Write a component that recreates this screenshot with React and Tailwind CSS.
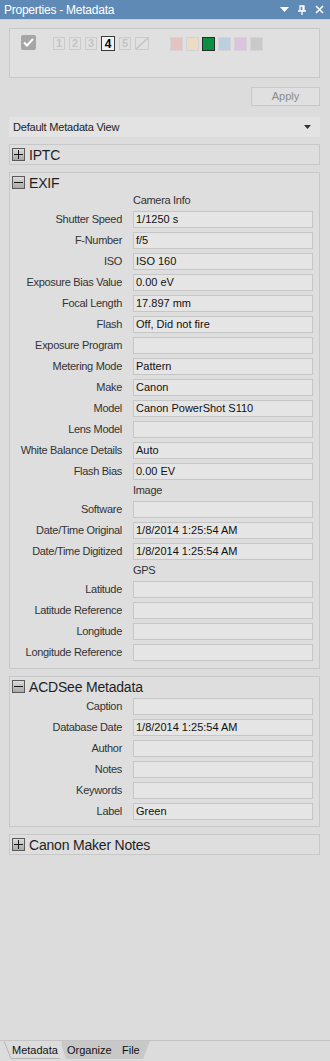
import React from "react";

const font = { fontFamily: '"Liberation Sans", Arial, sans-serif' };

const exifRows = [
  { head: "Camera Info" },
  { label: "Shutter Speed", value: "1/1250 s" },
  { label: "F-Number", value: "f/5" },
  { label: "ISO", value: "ISO 160" },
  { label: "Exposure Bias Value", value: "0.00 eV" },
  { label: "Focal Length", value: "17.897 mm" },
  { label: "Flash", value: "Off, Did not fire" },
  { label: "Exposure Program", value: "" },
  { label: "Metering Mode", value: "Pattern" },
  { label: "Make", value: "Canon" },
  { label: "Model", value: "Canon PowerShot S110" },
  { label: "Lens Model", value: "" },
  { label: "White Balance Details", value: "Auto" },
  { label: "Flash Bias", value: "0.00 EV" },
  { head: "Image" },
  { label: "Software", value: "" },
  { label: "Date/Time Original", value: "1/8/2014 1:25:54 AM" },
  { label: "Date/Time Digitized", value: "1/8/2014 1:25:54 AM" },
  { head: "GPS" },
  { label: "Latitude", value: "" },
  { label: "Latitude Reference", value: "" },
  { label: "Longitude", value: "" },
  { label: "Longitude Reference", value: "" },
];

const acdRows = [
  { label: "Caption", value: "" },
  { label: "Database Date", value: "1/8/2014 1:25:54 AM" },
  { label: "Author", value: "" },
  { label: "Notes", value: "" },
  { label: "Keywords", value: "" },
  { label: "Label", value: "Green" },
];

const swatches = [
  { bg: "bg-[#e6c3c3]", active: false },
  { bg: "bg-[#ecdcc4]", active: false },
  { bg: "bg-[#0b8f43]", active: true },
  { bg: "bg-[#bccfe0]", active: false },
  { bg: "bg-[#dcc5dc]", active: false },
  { bg: "bg-[#c9c9c9]", active: false },
];

const ToggleBox = ({ open }) => (
  <span className="flex h-[13px] w-[13px] items-center justify-center border border-[#5a5a5a] bg-gradient-to-b from-[#dcdcdc] to-[#a9a9a9]">
    <svg width="9" height="9" viewBox="0 0 9 9">
      <rect x="0" y="4" width="9" height="1" fill="#1a1a1a" />
      {!open && <rect x="4" y="0" width="1" height="9" fill="#1a1a1a" />}
    </svg>
  </span>
);

const SectionHeader = ({ open, title }) => (
  <div className="flex h-[19px] items-center gap-[4px] pl-[2px]">
    <ToggleBox open={open} />
    <span className="text-[14px] leading-none tracking-[-0.2px] text-[#1e1e1e]">{title}</span>
  </div>
);

const Row = ({ row }) => {
  if (row.head) {
    return (
      <div className="flex h-[17px] items-center pl-[123px] text-[11px] tracking-[-0.3px] text-[#333]">
        {row.head}
      </div>
    );
  }
  return (
    <div className="flex h-[21px] items-center">
      <div className="w-[114px] pr-[2px] text-right text-[11px] tracking-[-0.3px] text-[#333] whitespace-nowrap">
        {row.label}
      </div>
      <div className="ml-[9px] flex h-[17px] w-[180px] items-center border border-[#c6c6c6] bg-[#e5e5e5] pl-[2px] text-[11px] text-[#111]">
        {row.value}
      </div>
    </div>
  );
};

const Tabs = () => (
  <div className="relative flex h-[21px] border-t border-[#c4c4c4]">
    <div className="relative z-10 ml-[4px] flex h-[18px] w-[58px] items-center pl-[8px] text-[11px] text-[#111]">
      <svg className="absolute inset-0" width="58" height="18" viewBox="0 0 58 18">
        <polygon points="0,0 58,0 56,18 7,18" fill="#dcdcdc" />
        <polyline points="0,0 7,17.5 56,17.5" fill="none" stroke="#b5b5b5" />
      </svg>
      <span className="relative">Metadata</span>
    </div>
    <div className="relative -ml-[2px] flex h-[18px] w-[56px] items-center pl-[7px] text-[11px] text-[#111]">
      <svg className="absolute inset-0" width="56" height="18" viewBox="0 0 56 18">
        <polygon points="0,0 56,0 56,18 6,18" fill="#c8c8c8" />
      </svg>
      <span className="relative">Organize</span>
    </div>
    <div className="relative flex h-[18px] w-[34px] items-center pl-[6px] text-[11px] text-[#111]">
      <svg className="absolute inset-0" width="34" height="18" viewBox="0 0 34 18">
        <polygon points="0,0 34,0 27,18 0,18" fill="#c8c8c8" />
      </svg>
      <span className="relative">File</span>
    </div>
  </div>
);

export default function App() {
  return (
    <div style={font} className="flex h-[1061px] w-[330px] flex-col bg-[#dcdcdc]">
      {/* title bar */}
      <div className="flex h-[19px] items-center justify-between bg-[#5f8ab5] pl-[4px] pr-[6px]">
        <span className="text-[12px] tracking-[-0.25px] text-white">Properties - Metadata</span>
        <div className="flex items-center gap-[9px]">
          <svg width="9" height="6" viewBox="0 0 9 6">
            <polygon points="0,0 9,0 4.5,5" fill="white" />
          </svg>
          <svg width="8" height="10" viewBox="0 0 8 10">
            <path d="M2 1h4v5H2zM0 6h8M4 6v4M5 1v5" stroke="white" strokeWidth="1.3" fill="none" />
          </svg>
          <svg width="9" height="9" viewBox="0 0 9 9">
            <path d="M1 1l7 7M8 1l-7 7" stroke="white" strokeWidth="1.6" />
          </svg>
        </div>
      </div>
      <div className="h-[1px] bg-[#cfcfcf]" />

      <div className="flex flex-col px-[9px]">
        {/* rating / label box */}
        <div className="mt-[8px] flex h-[50px] w-[311px] items-start border border-[#c8c8c8] bg-[#e0e0e0] pt-[6px]">
          <span className="ml-[11px] flex h-[15px] w-[15px] items-center justify-center rounded-[2px] bg-[#a6a6a6]">
            <svg width="11" height="9" viewBox="0 0 11 9">
              <path d="M1 4.5l3 3 6-6.5" stroke="white" strokeWidth="2" fill="none" />
            </svg>
          </span>
          <div className="ml-[17px] mt-[2px] flex gap-[4px]">
            {["1", "2", "3"].map((n) => (
              <span key={n} className="flex h-[13px] w-[12px] items-center justify-center border border-[#cbcbcb] text-[11px] font-bold text-[#c4c4c4]">
                {n}
              </span>
            ))}
            <span className="-mt-[1px] flex h-[15px] w-[14px] items-center justify-center border border-[#3a3a3a] bg-[#f2f2f2] text-[12px] font-bold text-black">
              4
            </span>
            <span className="flex h-[13px] w-[12px] items-center justify-center border border-[#cbcbcb] text-[11px] font-bold text-[#c4c4c4]">
              5
            </span>
            <span className="flex h-[13px] w-[14px] items-center justify-center border border-[#cbcbcb]">
              <svg width="12" height="11" viewBox="0 0 12 11">
                <path d="M0 11L12 0" stroke="#c4c4c4" strokeWidth="1.4" />
              </svg>
            </span>
          </div>
          <div className="ml-[21px] mt-[2px] flex gap-[3px]">
            {swatches.map((s, i) => (
              <span
                key={i}
                className={`h-[14px] w-[13px] border ${s.bg} ${s.active ? "border-[#2b2b2b]" : "border-[#d4d4d4]"}`}
              />
            ))}
          </div>
        </div>

        {/* apply */}
        <div className="mt-[9px] flex justify-end pr-[1px]">
          <button className="flex h-[19px] w-[69px] items-center justify-center border border-[#c8c8c8] bg-[#e0e0e0] text-[11px] text-[#8a8a8a]">
            Apply
          </button>
        </div>

        {/* view selector */}
        <div className="mt-[11px] flex h-[20px] w-[311px] items-center justify-between bg-[#e3e3e3] pl-[4px] pr-[9px] text-[11px] tracking-[-0.2px] text-[#222]">
          <span>Default Metadata View</span>
          <svg width="7" height="4" viewBox="0 0 7 4">
            <polygon points="0,0 7,0 3.5,4" fill="#333" />
          </svg>
        </div>

        {/* IPTC */}
        <div className="mt-[7px] w-[311px] border border-[#c8c8c8] bg-[#dedede]">
          <SectionHeader open={false} title="IPTC" />
        </div>

        {/* EXIF */}
        <div className="mt-[7px] w-[311px] border border-[#c8c8c8] bg-[#dedede] pb-[5px]">
          <SectionHeader open title="EXIF" />
          {exifRows.map((r, i) => (
            <Row key={i} row={r} />
          ))}
        </div>

        {/* ACDSee */}
        <div className="mt-[7px] w-[311px] border border-[#c8c8c8] bg-[#dedede] pb-[4px]">
          <SectionHeader open title="ACDSee Metadata" />
          {acdRows.map((r, i) => (
            <Row key={i} row={r} />
          ))}
        </div>

        {/* Canon */}
        <div className="mt-[7px] w-[311px] border border-[#c8c8c8] bg-[#dedede]">
          <SectionHeader open={false} title="Canon Maker Notes" />
        </div>
      </div>

      <div className="flex-1" />
      <Tabs />
    </div>
  );
}
